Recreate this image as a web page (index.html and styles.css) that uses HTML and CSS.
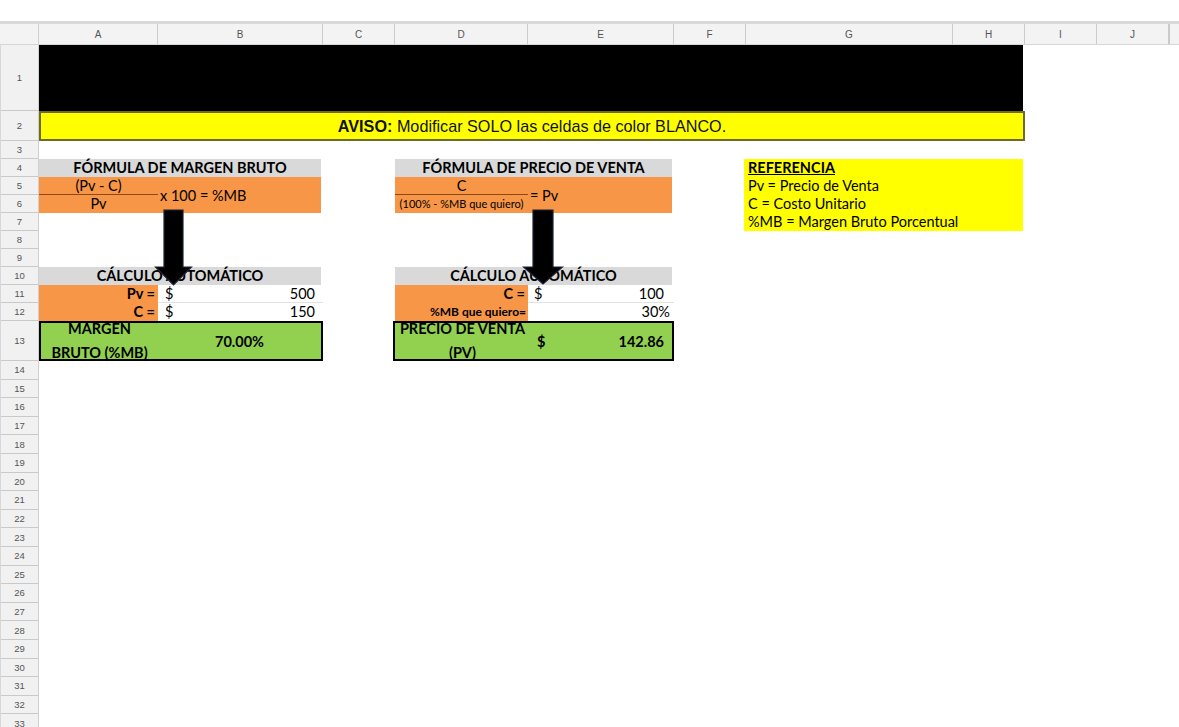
FILE: index.html
```html
<!DOCTYPE html>
<html lang="es">
<head>
<meta charset="utf-8">
<title>Margen bruto y precio de venta</title>
<link rel="stylesheet" href="styles.css">
</head>
<body>
<div class="topbar"></div>
<div class="sheet">
  <div class="corner"></div>
  <div class="colheads">
    <div class="ch w-a">A</div>
    <div class="ch w-b">B</div>
    <div class="ch w-c">C</div>
    <div class="ch w-d">D</div>
    <div class="ch w-e">E</div>
    <div class="ch w-f">F</div>
    <div class="ch w-g">G</div>
    <div class="ch w-h">H</div>
    <div class="ch w-i">I</div>
    <div class="ch w-j">J</div>
    <div class="ch w-k"></div>
  </div>
  <div class="rowheads">
    <div class="rh h-1">1</div>
    <div class="rh h-2">2</div>
    <div class="rh">3</div>
    <div class="rh">4</div>
    <div class="rh">5</div>
    <div class="rh">6</div>
    <div class="rh">7</div>
    <div class="rh">8</div>
    <div class="rh">9</div>
    <div class="rh">10</div>
    <div class="rh">11</div>
    <div class="rh">12</div>
    <div class="rh h-13">13</div>
    <div class="rh h-s">14</div>
    <div class="rh h-s">15</div>
    <div class="rh h-s">16</div>
    <div class="rh h-s">17</div>
    <div class="rh h-s">18</div>
    <div class="rh h-s">19</div>
    <div class="rh h-s">20</div>
    <div class="rh h-s">21</div>
    <div class="rh h-s">22</div>
    <div class="rh h-s">23</div>
    <div class="rh h-s">24</div>
    <div class="rh h-s">25</div>
    <div class="rh h-s">26</div>
    <div class="rh h-s">27</div>
    <div class="rh h-s">28</div>
    <div class="rh h-s">29</div>
    <div class="rh h-s">30</div>
    <div class="rh h-s">31</div>
    <div class="rh h-s">32</div>
    <div class="rh h-s">33</div>
  </div>

  <div class="cells">
    <div class="banner"></div>
    <div class="notice"><b>AVISO:</b>&nbsp;Modificar SOLO las celdas de color BLANCO.</div>

    <!-- margen bruto -->
    <div class="title left-block r4">FÓRMULA DE MARGEN BRUTO</div>
    <div class="orange frac-num col-a">(Pv - C)</div>
    <div class="orange frac-den col-a">Pv</div>
    <div class="orange frac-rest col-b">x 100 = %MB</div>

    <div class="title left-block r10">CÁLCULO AUTOMÁTICO</div>
    <div class="orange label col-a r11">Pv =</div>
    <div class="money col-b r11 grid-line"><span>$</span><span>500</span></div>
    <div class="orange label col-a r12">C =</div>
    <div class="money col-b r12"><span>$</span><span>150</span></div>
    <div class="result left-block">
      <div class="res-name w-a-in">MARGEN<br>BRUTO (%MB)</div>
      <div class="res-value">70.00%</div>
    </div>

    <!-- precio de venta -->
    <div class="title right-block r4">FÓRMULA DE PRECIO DE VENTA</div>
    <div class="orange frac-num col-d">C</div>
    <div class="orange frac-den col-d small">(100% - %MB que quiero)</div>
    <div class="orange frac-rest col-e">= Pv</div>

    <div class="title right-block r10">CÁLCULO AUTOMÁTICO</div>
    <div class="orange label col-d r11">C =</div>
    <div class="money col-e r11 grid-line"><span>$</span><span>100</span></div>
    <div class="orange label col-d r12 label-small">%MB que quiero=</div>
    <div class="money col-e r12 pct"><span></span><span>30%</span></div>
    <div class="result right-block">
      <div class="res-name w-d-in">PRECIO DE VENTA<br>(PV)</div>
      <div class="res-money"><span>$</span><span>142.86</span></div>
    </div>

    <!-- referencia -->
    <div class="legend">
      <u><b>REFERENCIA</b></u>
      <span>Pv = Precio de Venta</span>
      <span>C = Costo Unitario</span>
      <span>%MB = Margen Bruto Porcentual</span>
    </div>
  </div>

  <!-- flechas sobre las celdas -->
  <svg class="arrow arrow-left" width="39" height="78" viewBox="0 0 39 78">
    <path d="M10 1 H29 V58 H37.5 L19.5 76 L1.5 58 H10 Z" fill="#000" stroke="#1b2238" stroke-width="1.2"/>
  </svg>
  <svg class="arrow arrow-right" width="42" height="77" viewBox="0 0 42 77">
    <path d="M11 1 H31 V58 H40.5 L21 75 L1.5 58 H11 Z" fill="#000" stroke="#1b2238" stroke-width="1.2"/>
  </svg>
</div>
</body>
</html>
```

FILE: styles.css
```css
* { box-sizing: border-box; }

html, body {
  margin: 0;
  padding: 0;
  background: #ffffff;
}

.topbar {
  height: 21px;
  background: #ffffff;
}

.sheet {
  position: relative;
  display: grid;
  grid-template-columns: 39px 1fr;
  grid-template-rows: 21px auto;
  border-top: 3px solid #d9d9d9;
  font-family: "Lato", "Noto Sans", sans-serif;
  font-size: 14.5px;
  color: #000;
  overflow: hidden;
  height: 706px;
}

/* encabezados */
.corner {
  background: #f3f3f3;
  border-right: 1px solid #cfcfcf;
  border-bottom: 1px solid #d6d6d6;
}

.colheads {
  display: flex;
  background: #f3f3f3;
  border-bottom: 1px solid #d6d6d6;
}

.ch {
  flex: none;
  display: flex;
  align-items: center;
  justify-content: center;
  border-right: 1px solid #cbcbcb;
  font-family: "Liberation Sans", Arial, sans-serif;
  font-size: 10px;
  color: #555;
  padding-top: 1px;
}

.w-a { width: 119px; }
.w-b { width: 165px; }
.w-c { width: 72px; }
.w-d { width: 133px; }
.w-e { width: 146px; }
.w-f { width: 72px; }
.w-g { width: 207px; }
.w-h { width: 72px; }
.w-i { width: 72px; }
.w-j { width: 72px; }
.w-k { width: 40px; border-right: none; border-left: 1px solid #cbcbcb; }

.rowheads {
  display: flex;
  flex-direction: column;
  background: #f1f1f1;
  border-right: 1px solid #d0d0d0;
  border-left: 1px solid #d8d8d8;
}

.rh {
  flex: none;
  height: 18px;
  display: flex;
  align-items: center;
  justify-content: center;
  border-bottom: 1px solid #c9c9c9;
  font-family: "Liberation Sans", Arial, sans-serif;
  font-size: 9.5px;
  color: #555;
}

.h-1 { height: 66px; }
.h-2 { height: 30px; }
.h-13 { height: 40px; }
.h-s { height: 18.6px; }

/* cuadrícula de celdas */
.cells {
  display: grid;
  grid-template-columns: 119px 165px 72px 133px 146px 72px 207px 72px 72px 72px 1fr;
  grid-template-rows: 66px 30px repeat(10, 18px) 40px repeat(20, 18.6px);
}

.banner {
  grid-row: 1;
  grid-column: 1 / 9;
  background: #000;
  margin-right: 2px;
}

.notice {
  grid-row: 2;
  grid-column: 1 / 9;
  background: #ffff00;
  border: 2px solid #6d6a2c;
  display: flex;
  align-items: center;
  justify-content: center;
  font-family: "Liberation Sans", Arial, sans-serif;
  font-size: 16.2px;
  color: #111;
  padding-top: 1px;
}

.col-a { grid-column: 1; }
.col-b { grid-column: 2; }
.col-d { grid-column: 4; }
.col-e { grid-column: 5; }
.left-block { grid-column: 1 / 3; }
.right-block { grid-column: 4 / 6; }
.r4 { grid-row: 4; }
.r10 { grid-row: 10; }
.r11 { grid-row: 11; }
.r12 { grid-row: 12; }

.title {
  background: #d9d9d9;
  font-weight: 700;
  text-align: center;
  line-height: 18px;
  margin-right: 2px;
}

.orange {
  background: #f79646;
}

.frac-num {
  grid-row: 5;
  text-align: center;
  line-height: 17px;
  border-bottom: 1.5px solid #8a4a17;
}

.frac-den {
  grid-row: 6;
  text-align: center;
  line-height: 17px;
}

.frac-den.small {
  font-size: 11px;
  line-height: 18px;
  white-space: nowrap;
}

.frac-rest {
  grid-row: 5 / 7;
  display: flex;
  align-items: center;
  padding-left: 2px;
  margin-right: 2px;
}

.label {
  font-weight: 700;
  text-align: right;
  padding-right: 3px;
  line-height: 18px;
}

.label-small {
  font-size: 12px;
  padding-right: 2px;
}

.money {
  display: flex;
  justify-content: space-between;
  align-items: center;
  padding: 0 8px 0 7px;
  line-height: 18px;
}

.col-e.money { padding: 0 10px 0 6px; }
.col-e.money.pct { padding-right: 4px; }

.grid-line {
  border-bottom: 1px solid #e2e2e2;
}

.result {
  grid-row: 13;
  display: flex;
  background: #92d050;
  border: 2px solid #000;
  font-weight: 700;
}

.right-block.result { margin-left: -2px; }

.res-name {
  flex: none;
  text-align: center;
  line-height: 24px;
  display: flex;
  align-items: center;
  justify-content: center;
}

.w-a-in { width: 117px; }
.w-d-in { width: 135px; }

.res-value {
  flex: 1;
  display: flex;
  align-items: center;
  justify-content: center;
}

.res-money {
  flex: 1;
  display: flex;
  align-items: center;
  justify-content: space-between;
  padding: 0 8px 0 7px;
}

.legend {
  grid-row: 4 / 8;
  grid-column: 7 / 9;
  background: #ffff00;
  display: flex;
  flex-direction: column;
  padding-left: 4px;
  margin-left: -2px;
  margin-right: 2px;
  line-height: 18px;
}

.arrow {
  position: absolute;
}

.arrow-left {
  left: 154px;
  top: 185px;
}

.arrow-right {
  left: 522px;
  top: 185px;
}
```
